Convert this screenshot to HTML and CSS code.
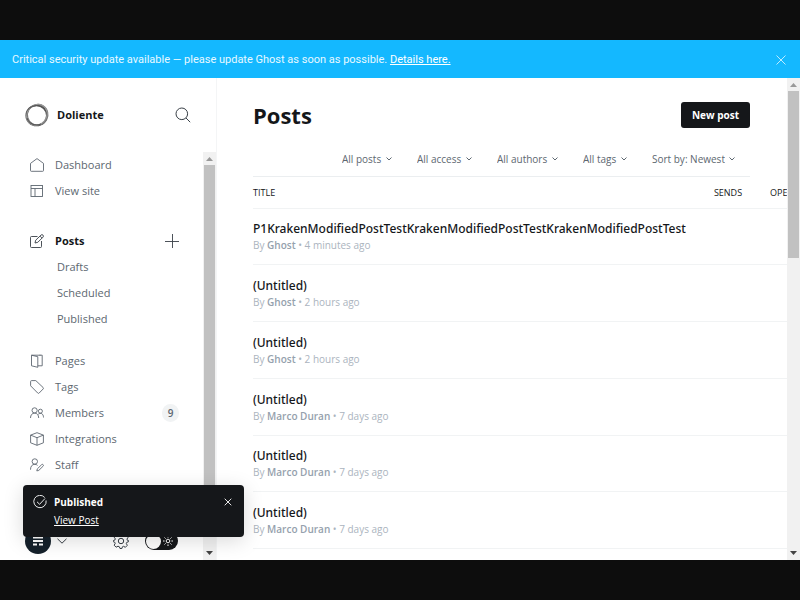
FILE: index.html
```html
<!DOCTYPE html>
<html lang="en">
<head>
<meta charset="utf-8">
<meta name="viewport" content="width=device-width, initial-scale=1">
<title>Posts - Doliente</title>
<link rel="stylesheet" href="styles.css">
</head>
<body>
<div class="app">
  <div class="banner">
    <p class="banner-text">Critical security update available — please update Ghost as soon as possible. <a href="#details">Details here.</a></p>
    <button class="icon-button" type="button" aria-label="Close">
      <svg width="10" height="10" viewBox="0 0 10 10"><path d="M.5.5l9 9M9.5.5l-9 9"/></svg>
    </button>
  </div>
  <div class="viewport">
    <aside class="sidebar">
      <header class="site">
        <svg class="site-logo" width="26" height="26" viewBox="0 0 26 26">
          <ellipse cx="12.5" cy="13.5" rx="10.3" ry="10" stroke="#555" stroke-width="1.6"/>
          <ellipse cx="13.5" cy="12.5" rx="10.2" ry="10.4" stroke="#777" stroke-width="1.2" transform="rotate(30 13 13)"/>
          <ellipse cx="13" cy="12.8" rx="11.200" ry="9.700" stroke="#999" stroke-width="1" transform="rotate(-50 13 13)"/>
          <path d="M4 7.5C8 2.500 17 2 21 7M3 16c1.500 6 9 8.500 14 6" stroke="#555" stroke-width="1"/>
        </svg>
        <span class="site-name">Doliente</span>
        <button class="icon-button search" type="button" aria-label="Search">
          <svg width="16" height="16" viewBox="0 0 16 16"><circle cx="6.800" cy="6.800" r="5.800"/><path d="M11 11L15.200 15.200"/></svg>
        </button>
      </header>
      <div class="sidebar-body">
        <div class="sidebar-content">
          <nav class="nav">
            <ul class="nav-group">
              <li class="nav-item"><a href="#dashboard"><svg width="14" height="14" viewBox="0 0 14 14"><path d="M.5 5.400L7 .6l6.500 4.800v7.100a.8.8 0 0 1-.8.8H1.300a.8.8 0 0 1-.8-.8z"/></svg>Dashboard</a></li>
              <li class="nav-item"><a href="#site"><svg width="14" height="14" viewBox="0 0 14 14"><rect x="1" y="1.500" width="11.500" height="11"/><path d="M1 4.500h11.500M5 4.500v8"/></svg>View site</a></li>
            </ul>
            <ul class="nav-group">
              <li class="nav-item current"><a href="#posts"><svg width="14" height="14" viewBox="0 0 14 14"><path d="M7.500 2.500h-6a1 1 0 0 0-1 1v9a1 1 0 0 0 1 1h9a1 1 0 0 0 1-1V7"/><path d="M5 9l.7-2.800 5.300-5.100a1.400 1.400 0 0 1 2 2L7.800 8.300zM10 2.100l2 2"/></svg>Posts</a>
                <button class="icon-button add" type="button" aria-label="New post"><svg width="14" height="14" viewBox="0 0 14 14"><path d="M7.500 0v14M0 7.500h14"/></svg></button></li>
              <li class="nav-item sub"><a href="#drafts">Drafts</a></li>
              <li class="nav-item sub"><a href="#scheduled">Scheduled</a></li>
              <li class="nav-item sub"><a href="#published">Published</a></li>
            </ul>
            <ul class="nav-group">
              <li class="nav-item"><a href="#pages"><svg width="14" height="14" viewBox="0 0 14 14"><path d="M1.500 1.200l6.300 1.500v10.600l-6.300-1.500zM1.500 1.200h9M9.500 1.200h2.700v10.600H7.800"/></svg>Pages</a></li>
              <li class="nav-item"><a href="#tags"><svg width="14" height="14" viewBox="0 0 14 14"><path d="M.6 1.600a1 1 0 0 1 1-1h4.200l7.300 6.900a1 1 0 0 1 0 1.500l-3.900 4a1 1 0 0 1-1.500 0L.6 5.800z"/></svg>Tags</a></li>
              <li class="nav-item"><a href="#members"><svg width="14" height="14" viewBox="0 0 14 14"><circle cx="4.600" cy="4.400" r="2.600"/><circle cx="10.400" cy="5.200" r="2"/><path d="M.5 12c0-3 1.700-4.900 4.100-4.900S8.700 9 8.700 12M8.200 8.300c2.600-2.200 5.300-.5 5.300 3.200"/></svg>Members</a><span class="count">9</span></li>
              <li class="nav-item"><a href="#integrations"><svg width="14" height="14" viewBox="0 0 14 14"><path d="M7 .7l6.400 2.400v7.700L7 13.300.6 10.800V3.100zM.6 3.100L7 5.700l6.400-2.600M7 5.700v7.600"/></svg>Integrations</a></li>
              <li class="nav-item"><a href="#staff"><svg width="14" height="14" viewBox="0 0 14 14"><circle cx="4.800" cy="3.500" r="2.700"/><path d="M.5 11.700c0-3.500 1.700-5.400 4.300-5.400 1.200 0 2 .4 2.700 1.100M6.800 12.900l.5-2 4.300-4.200a1 1 0 0 1 1.500 1.500l-4.300 4.200z"/></svg>Staff</a></li>
            </ul>
          </nav>
          <footer class="sidebar-footer">
            <button class="user" type="button" aria-label="Account">
              <span class="avatar"><svg width="10" height="10" viewBox="0 0 10 10"><path d="M0 1.500h10M0 5h10M0 8.500h4M6 8.500h4"/></svg></span>
              <svg width="10" height="6" viewBox="0 0 10 6"><path d="M.5.8L5 5.200 9.500.8"/></svg>
            </button>
            <a class="settings" href="#settings" aria-label="Settings"><svg width="16" height="16" viewBox="0 0 16 16"><circle cx="8" cy="8" r="2.700"/><path d="M6.600.7h2.800l.5 2 1.300.6 1.900-1 1.900 2-1 1.800.4 1.200 1.300.4v.9l-1.900.7-.5 1.200 1 1.800-1.900 2-1.900-1-1.100.5-.5 1.700H7l-.6-1.700-1.400-.6-1.900 1-1.900-2 1-1.800-.4-1.100-1.500-.6V7.600l1.500-.5.5-1.200-1-1.700 1.900-2 1.800 1 1.200-.5z"/></svg></a>
            <label class="switch"><input type="checkbox" aria-label="Night mode"><svg width="10" height="10" viewBox="0 0 10 10"><circle cx="5" cy="5" r="1.800"/><path d="M5 0v1.600M5 8.400V10M0 5h1.600M8.400 5H10M1.500 1.500l1.100 1.100M7.400 7.400l1.100 1.100M1.500 8.500l1.100-1.100M7.400 2.600l1.100-1.100"/></svg></label>
          </footer>
        </div>
        <div class="scrollbar" aria-hidden="true">
          <svg width="7" height="4" viewBox="0 0 7 4"><path d="M0 4l3.500-4L7 4z" fill="#999"/></svg>
          <div class="thumb thumb-long"></div>
          <svg class="down" width="7" height="4" viewBox="0 0 7 4"><path d="M0 0l3.500 4L7 0z" fill="#444"/></svg>
        </div>
      </div>
    </aside>
    <main class="main">
      <header class="page-header">
        <h1>Posts</h1>
        <button class="new-post" type="button">New post</button>
      </header>
      <div class="filters">
        <label class="filter"><select aria-label="Type"><option>All posts</option></select><svg width="6" height="4" viewBox="0 0 6 4"><path d="M.5.5L3 3 5.500.5"/></svg></label>
        <label class="filter"><select aria-label="Access"><option>All access</option></select><svg width="6" height="4" viewBox="0 0 6 4"><path d="M.5.5L3 3 5.500.5"/></svg></label>
        <label class="filter"><select aria-label="Author"><option>All authors</option></select><svg width="6" height="4" viewBox="0 0 6 4"><path d="M.5.5L3 3 5.500.5"/></svg></label>
        <label class="filter"><select aria-label="Tag"><option>All tags</option></select><svg width="6" height="4" viewBox="0 0 6 4"><path d="M.5.5L3 3 5.500.5"/></svg></label>
        <label class="filter"><select aria-label="Sort"><option>Sort by: Newest</option></select><svg width="6" height="4" viewBox="0 0 6 4"><path d="M.5.5L3 3 5.500.5"/></svg></label>
      </div>
      <table class="posts">
        <thead><tr><th>Title</th><th>Sends</th><th>Opens</th></tr></thead>
        <tbody>
          <tr><td><a href="#p1">P1KrakenModifiedPostTestKrakenModifiedPostTestKrakenModifiedPostTest</a><p>By <b>Ghost</b> • 4 minutes ago</p></td><td></td><td></td></tr>
          <tr><td><a href="#p2">(Untitled)</a><p>By <b>Ghost</b> • 2 hours ago</p></td><td></td><td></td></tr>
          <tr><td><a href="#p3">(Untitled)</a><p>By <b>Ghost</b> • 2 hours ago</p></td><td></td><td></td></tr>
          <tr><td><a href="#p4">(Untitled)</a><p>By <b>Marco Duran</b> • 7 days ago</p></td><td></td><td></td></tr>
          <tr><td><a href="#p5">(Untitled)</a><p>By <b>Marco Duran</b> • 7 days ago</p></td><td></td><td></td></tr>
          <tr><td><a href="#p6">(Untitled)</a><p>By <b>Marco Duran</b> • 7 days ago</p></td><td></td><td></td></tr>
        </tbody>
      </table>
    </main>
    <div class="scrollbar" aria-hidden="true">
      <svg width="7" height="4" viewBox="0 0 7 4"><path d="M0 4l3.500-4L7 4z" fill="#999"/></svg>
      <div class="thumb thumb-short"></div>
      <svg class="down" width="7" height="4" viewBox="0 0 7 4"><path d="M0 0l3.500 4L7 0z" fill="#444"/></svg>
    </div>
  </div>
  <div class="toast" role="status">
    <svg width="14" height="14" viewBox="0 0 14 14"><path d="M11.700 2.500A6.200 6.200 0 1 0 13.100 5.500M4 6.800l2.600 2.500L12 3.500"/></svg>
    <div class="toast-text"><strong>Published</strong><a href="#view">View Post</a></div>
    <button class="icon-button" type="button" aria-label="Dismiss"><svg width="8" height="8" viewBox="0 0 8 8"><path d="M.7.7l6.600 6.600M7.300.7L.7 7.300"/></svg></button>
  </div>
</div>
</body>
</html>
```
FILE: styles.css
```css
* { box-sizing: border-box; }

body {
  margin: 0;
  padding: 40px 0;
  height: 100vh;
  background: #0d0d0d;
  color: #15171a;
  font-family: "Open Sans", "Noto Sans", sans-serif;
  font-size: 11px;
  line-height: 16px;
}

h1, p, ul { margin: 0; padding: 0; }
ul { list-style: none; }
a { color: inherit; }
svg { display: block; flex: none; fill: none; stroke: currentColor; }
button { font: inherit; color: inherit; border: 0; padding: 0; background: none; }
.icon-button { display: flex; align-items: center; justify-content: center; }

.app {
  position: relative;
  display: flex;
  flex-direction: column;
  height: 100%;
  background: #fff;
}

.banner {
  display: flex;
  flex: none;
  align-items: center;
  justify-content: space-between;
  height: 38px;
  padding: 1px 14px 0 12px;
  background: #14b8ff;
  color: #e8f8ff;
  font-family: Roboto, "Open Sans", sans-serif;
}
.banner a { color: #fff; }
.banner svg { stroke-width: .8; }

.viewport { display: flex; flex: 1; min-height: 0; }

.sidebar {
  display: flex;
  flex: none;
  flex-direction: column;
  width: 217px;
  border-right: 1px solid #f4f5f6;
}
.site {
  display: flex;
  flex: none;
  align-items: center;
  height: 74px;
  padding: 0 25px 0 24px;
}
.site-name { margin-left: 7px; font-weight: 700; }
.search { margin-left: auto; color: #394047; }
.sidebar-body { display: flex; flex: 1; min-height: 0; }
.sidebar-content { display: flex; flex: 1; flex-direction: column; overflow: hidden; }

.nav { display: flex; flex: 1; flex-direction: column; min-height: 0; gap: 24px; color: #5d6770; }
.nav-group:nth-child(3) { margin-top: -8px; }
.nav-item {
  display: flex;
  align-items: center;
  justify-content: space-between;
  height: 26px;
  padding: 0 24px 0 30px;
}
.nav-item a { display: flex; align-items: center; gap: 11px; text-decoration: none; }
.nav-item svg { stroke-width: .9; }
.nav-item.current { color: #15171a; font-weight: 700; }
.nav-item.current svg { color: #394047; }
.nav-item.sub { padding-left: 57px; }
.count {
  min-width: 17px;
  border-radius: 9px;
  background: #f1f3f4;
  font-size: 10px;
  font-weight: 600;
  line-height: 18px;
  text-align: center;
}

.sidebar-footer {
  display: flex;
  flex: none;
  align-items: center;
  height: 38px;
  padding: 0 25px;
  color: #394047;
}
.user { display: flex; align-items: center; gap: 6px; }
.avatar {
  display: grid;
  place-items: center;
  width: 26px;
  height: 26px;
  border-radius: 50%;
  background: #15212b;
  color: #fff;
}
.avatar svg { stroke-width: 2; }
.settings { margin-left: auto; margin-right: 16px; }
.switch {
  display: flex;
  align-items: center;
  justify-content: space-between;
  width: 33px;
  height: 18px;
  padding: 0 5px 0 1px;
  border-radius: 9px;
  background: #15171a;
  color: #fff;
}
.switch input {
  appearance: none;
  width: 15px;
  height: 15px;
  margin: 0;
  border-radius: 50%;
  background: #fff;
}

.scrollbar {
  display: flex;
  flex: none;
  flex-direction: column;
  align-items: center;
  width: 13px;
  padding: 5px 0;
  background: #f1f1f1;
}
.scrollbar svg { stroke: none; }
.thumb { width: 11px; margin-top: 4px; background: #c1c1c1; }
.thumb-long { height: 88%; }
.thumb-short { height: 167px; }
.down { margin-top: auto; }

.main { flex: 1; min-width: 0; overflow: hidden; padding: 0 37px 0 36px; }
.page-header {
  display: flex;
  align-items: center;
  justify-content: space-between;
  height: 74px;
}
h1 { font-size: 22px; font-weight: 700; line-height: 28px; }
.new-post {
  height: 26px;
  padding: 0 11px;
  border-radius: 3px;
  background: #15171a;
  color: #fff;
  font-size: 10px;
  font-weight: 700;
}
.filters {
  display: flex;
  justify-content: flex-end;
  gap: 25px;
  height: 25px;
  padding-right: 15px;
  border-bottom: 1px solid #ebeef0;
  color: #5d6770;
  font-size: 10px;
}
.filter { display: flex; gap: 4px; height: 13px; align-items: center; }
.filter select {
  appearance: none;
  margin: 0;
  padding: 0;
  border: 0;
  background: none;
  color: inherit;
  font: inherit;
}

.posts { height: 372px; border-collapse: collapse; white-space: nowrap; }
.posts th {
  height: 31px;
  font-size: 9px;
  font-weight: 500;
  text-transform: uppercase;
}
.posts th, .posts td {
  padding: 2px 28px 0 0;
  border-bottom: 1px solid #f1f3f4;
  text-align: left;
}
.posts a { font-family: "Noto Sans", "Open Sans", sans-serif; font-size: 12px; font-weight: 500; text-decoration: none; }
.posts p { color: #abb4be; font-size: 10px; }
.posts b { color: #95a1ad; font-weight: 600; }

.toast {
  position: absolute;
  bottom: 23px;
  left: 23px;
  display: flex;
  align-items: flex-start;
  width: 221px;
  padding: 9px 12px 9px 10px;
  border-radius: 4px;
  background: #15171a;
  box-shadow: 0 4px 20px rgba(0, 0, 0, .15);
  color: #fff;
}
.toast > svg { margin-top: 1px; }
.toast > svg, .toast button svg { stroke-width: .9; }
.toast-text { display: flex; flex: 1; flex-direction: column; gap: 2px; margin-left: 7px; font-size: 10px; }
.toast-text a { align-self: flex-start; }
.toast .icon-button { height: 16px; }
```
